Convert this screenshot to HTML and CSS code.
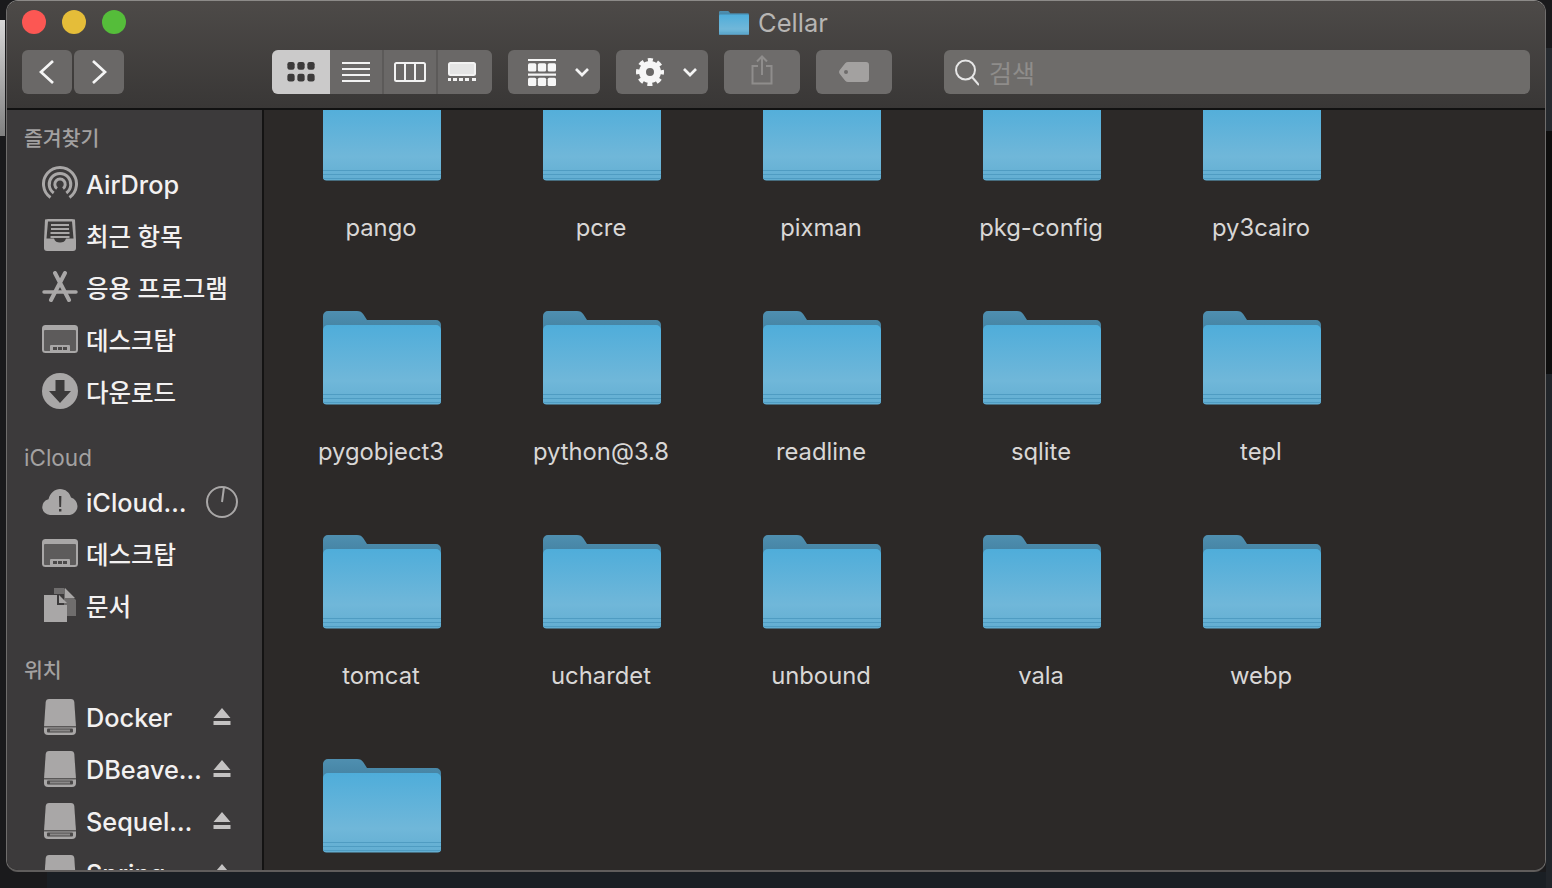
FILE: index.html
```html
<!DOCTYPE html>
<html>

<head>
	<meta charset="utf-8">
	<title>Cellar</title>
	<link rel="stylesheet" href="styles.css">
</head>

<body>
	<svg class="sprite" width="0" height="0">
		<defs>
			<linearGradient id="folderFront" x1="0" y1="0" x2="0" y2="1">
				<stop offset="0" stop-color="#4fadda" />
				<stop offset="0.7" stop-color="#70b7d9" />
				<stop offset="1" stop-color="#62aed2" />
			</linearGradient>
			<linearGradient id="folderBack" x1="0" y1="0" x2="0" y2="1">
				<stop offset="0" stop-color="#4f8fb0" />
				<stop offset="1" stop-color="#417f9f" />
			</linearGradient>
			<symbol id="folder" viewBox="0 0 118 94">
				<path fill="url(#folderBack)" d="M0 20V5a5 5 0 0 1 5-5h29c3 0 5 1 6.500 3.500L44 9h69a5 5 0 0 1 5 5v10H0z" />
				<path fill="url(#folderFront)" d="M0 19a5 5 0 0 1 5-5h108a5 5 0 0 1 5 5v71a3.500 3.500 0 0 1-3.500 3.500H3.500A3.500 3.500 0 0 1 0 90z" />
				<path fill="none" stroke="#4f9cc2" stroke-width="1" d="M0 83.500h118M0 87.500h118M0 91.500h118" />
			</symbol>
			<symbol id="desk" viewBox="0 0 36 28">
				<rect width="36" height="28" rx="3.500" fill="#a9a7a7" />
				<rect x="2" y="5" width="32" height="21" rx="1" fill="#5d5b5b" />
				<rect x="8" y="20" width="20" height="8" rx="1" fill="#a9a7a7" />
				<path fill="#4b4949" d="M11 22h4v3h-4zM16 22h4v3h-4zM21 22h4v3h-4z" />
			</symbol>
			<symbol id="drive" viewBox="0 0 32 36">
				<path fill="#a9a7a7" d="M5 0h22c2 0 3 1 3.300 3L32 28v4a4 4 0 0 1-4 4H4a4 4 0 0 1-4-4v-4L1.700 3C2 1 3 0 5 0z" />
				<path fill="#5a5858" d="M0 27h32v1.500H0z" />
				<rect x="3" y="29.500" width="26" height="4" rx="1" fill="#4b4949" />
				<rect x="6" y="30.500" width="20" height="2" fill="#8b8989" />
			</symbol>
			<symbol id="eject" viewBox="0 0 18 18">
				<path fill="#c4c2c2" d="M9 0l8.500 10H.5zM.5 13h17v4H.5z" />
			</symbol>
		</defs>
	</svg>

	<div class="window">
		<header class="toolbar">
			<div class="titlebar">
				<div class="lights">
					<span class="light red"></span>
					<span class="light yellow"></span>
					<span class="light green"></span>
				</div>
				<div class="title">
					<svg class="title-folder" width="30" height="24">
						<use href="#folder" />
					</svg>
					<span>Cellar</span>
				</div>
			</div>
			<div class="tools">
				<div class="nav">
					<button class="btn nav-btn"><svg width="18" height="26" viewBox="0 0 18 26">
							<path d="M15 2L3 13l12 11" class="line" />
						</svg></button>
					<button class="btn nav-btn"><svg width="18" height="26" viewBox="0 0 18 26">
							<path d="M3 2l12 11L3 24" class="line" />
						</svg></button>
				</div>
				<div class="views">
					<button class="btn view on"><svg width="28" height="20" viewBox="0 0 30 22" fill="#3c3a3a">
							<rect width="8" height="8.500" rx="2.500" />
							<rect x="11" width="8" height="8.500" rx="2.500" />
							<rect x="22" width="8" height="8.500" rx="2.500" />
							<rect y="13" width="8" height="8.500" rx="2.500" />
							<rect x="11" y="13" width="8" height="8.500" rx="2.500" />
							<rect x="22" y="13" width="8" height="8.500" rx="2.500" />
						</svg></button>
					<button class="btn view"><svg width="28" height="20" viewBox="0 0 28 20" fill="#f2f2f2">
							<path d="M0 0h28v2H0zM0 6h28v2H0zM0 12h28v2H0zM0 18h28v2H0z" />
						</svg></button>
					<button class="btn view"><svg width="32" height="20" viewBox="0 0 32 20" fill="none" stroke="#f2f2f2" stroke-width="2">
							<rect x="1" y="1" width="30" height="18" rx="1.500" />
							<path d="M11 1v18M21 1v18" />
						</svg></button>
					<button class="btn view wide"><svg width="28" height="20" viewBox="0 0 28 20">
							<rect x="1" y="1" width="26" height="12" rx="1.500" fill="#e4e4e4" stroke="#f2f2f2" stroke-width="2" />
							<path fill="#f2f2f2" d="M0 16h3v3H0zM5 16h4v3H5zM11 16h4v3h-4zM17 16h4v3h-4zM24 16h4v3h-4z" />
						</svg></button>
				</div>
				<button class="btn menu">
					<svg width="28" height="28" viewBox="0 0 27 27" fill="#f6f6f6">
						<path d="M0 1h27v2H0zM0 15h27v2H0z" />
						<rect x="0" y="5" width="8" height="8" rx="1.500" />
						<rect x="9.500" y="5" width="8" height="8" rx="1.500" />
						<rect x="19" y="5" width="8" height="8" rx="1.500" />
						<rect x="0" y="19" width="8" height="8" rx="1.500" />
						<rect x="9.500" y="19" width="8" height="8" rx="1.500" />
						<rect x="19" y="19" width="8" height="8" rx="1.500" />
					</svg>
					<svg width="16" height="10" viewBox="0 0 16 10">
						<path d="M2 2l6 6 6-6" class="line" />
					</svg>
				</button>
				<button class="btn menu">
					<svg width="28" height="28" viewBox="0 0 28 28">
						<circle cx="14" cy="14" r="7.500" fill="none" stroke="#f6f6f6" stroke-width="7" />
						<circle cx="14" cy="14" r="12" fill="none" stroke="#f6f6f6" stroke-width="4" stroke-dasharray="5 4.425" stroke-dashoffset="2.500" />
					</svg>
					<svg width="16" height="10" viewBox="0 0 16 10">
						<path d="M2 2l6 6 6-6" class="line" />
					</svg>
				</button>
				<button class="btn action share"><svg width="22" height="30" viewBox="0 0 22 30" fill="none" stroke="#8f8d8c" stroke-width="2">
						<path d="M7 11H1.500v17.500h19V11H15M11 20V2M6 6.500L11 1.500l5 5" />
					</svg></button>
				<button class="btn action"><svg width="30" height="20" viewBox="0 0 30 20">
						<path fill="#a3a1a0" d="M9 0h18a3 3 0 0 1 3 3v14a3 3 0 0 1-3 3H9c-1 0-2-.4-2.800-1.200L.8 12c-1-1.200-1-2.800 0-4l5.400-6.800C7 .4 8 0 9 0z" />
						<circle cx="7" cy="10" r="2" fill="#6e6c6b" />
					</svg></button>
				<div class="search">
					<svg width="24" height="28" viewBox="0 0 24 28" fill="none" stroke="#e6e6e6" stroke-width="2">
						<circle cx="10.500" cy="12" r="9.500" />
						<path d="M17 19l7 8" />
					</svg>
					<span>검색</span>
				</div>
			</div>
		</header>

		<div class="body">
			<aside class="sidebar">
				<h3 class="ko">즐겨찾기</h3>
				<div class="item">
					<span class="ico"><svg width="36" height="36" viewBox="0 0 36 36" fill="none" stroke="#a9a7a7" stroke-width="3">
							<path d="M8.500 31.500A16.500 16.500 0 1 1 27.500 31.500" />
							<path d="M11.700 27A10.800 10.800 0 1 1 24.300 27" />
							<path d="M15 22.500A5.200 5.200 0 1 1 21 22.500" />
						</svg></span>AirDrop
				</div>
				<div class="item ko">
					<span class="ico"><svg width="32" height="32" viewBox="0 0 32 32">
							<path fill="#a9a7a7" d="M4 0h24l3 0.500 1 21V29a3 3 0 0 1-3 3H3a3 3 0 0 1-3-3v-7.500L1 .5z" />
							<path fill="#3c3a3a" d="M4 2.500h24l1.500 17H22c-1 3-3 4-6 4s-5-1-6-4H2.500z" />
							<path fill="#a9a7a7" d="M7 5h18v2H7zM7 9h18v2H7zM6.500 13h19v2h-19zM6.500 17h19v2h-19z" />
						</svg></span>최근 항목
				</div>
				<div class="item ko">
					<span class="ico"><svg width="36" height="32" viewBox="0 0 36 32" fill="none" stroke="#a9a7a7" stroke-linecap="round">
							<path stroke-width="4" d="M23 2L9 29M13 2l14 27" />
							<path stroke-width="3.500" d="M2 21h32" />
						</svg></span>응용 프로그램
				</div>
				<div class="item ko">
					<span class="ico"><svg width="36" height="28">
							<use href="#desk" />
						</svg></span>데스크탑
				</div>
				<div class="item ko">
					<span class="ico"><svg width="36" height="36" viewBox="0 0 36 36">
							<circle cx="18" cy="18" r="18" fill="#a9a7a7" />
							<path fill="#3c3a3a" d="M13.500 7h9v11H29L18 30 7 18h6.500z" />
						</svg></span>다운로드
				</div>

				<h3 class="cloud">iCloud</h3>
				<div class="item">
					<span class="ico"><svg width="36" height="26" viewBox="0 0 36 26">
							<path fill="#a9a7a7" d="M8 26a8 8 0 0 1-1.500-15.800C8 4 13 0 18 0c5.500 0 9.500 3.500 11 8.500A9 9 0 0 1 28 26z" />
							<path fill="#3c3a3a" d="M17 7h2.400l-.3 11h-1.800zM17 20h2.400v2.500H17z" />
						</svg></span>
					<span class="name">iCloud…</span>
					<svg class="pie" width="32" height="32" viewBox="0 0 32 32" fill="none" stroke="#a9a7a7" stroke-width="2">
						<circle cx="16" cy="16" r="15" />
						<path d="M16 16l2-15" />
					</svg>
				</div>
				<div class="item ko">
					<span class="ico"><svg width="36" height="28">
							<use href="#desk" />
						</svg></span>데스크탑
				</div>
				<div class="item ko">
					<span class="ico"><svg width="32" height="34" viewBox="0 0 32 34">
							<path fill="#6f6d6d" d="M10 0h10l12 12v16H20V6H10z" />
							<path fill="#a9a7a7" d="M0 7h13v10h10v17H0zM15 7l8 8h-8zM21 0l10 10H21z" />
						</svg></span>문서
				</div>

				<h3 class="places ko">위치</h3>
				<div class="item">
					<span class="ico"><svg width="32" height="36">
							<use href="#drive" />
						</svg></span>
					<span class="name">Docker</span>
					<svg class="eject" width="18" height="18">
						<use href="#eject" />
					</svg>
				</div>
				<div class="item">
					<span class="ico"><svg width="32" height="36">
							<use href="#drive" />
						</svg></span>
					<span class="name">DBeave…</span>
					<svg class="eject" width="18" height="18">
						<use href="#eject" />
					</svg>
				</div>
				<div class="item">
					<span class="ico"><svg width="32" height="36">
							<use href="#drive" />
						</svg></span>
					<span class="name">Sequel…</span>
					<svg class="eject" width="18" height="18">
						<use href="#eject" />
					</svg>
				</div>
				<div class="item">
					<span class="ico"><svg width="32" height="36">
							<use href="#drive" />
						</svg></span>
					<span class="name">Spring…</span>
					<svg class="eject" width="18" height="18">
						<use href="#eject" />
					</svg>
				</div>
			</aside>

			<main class="files">
				<div class="grid">
					<div class="cell"><svg class="folder" width="118" height="94"><use href="#folder" /></svg><span>pango</span></div>
					<div class="cell"><svg class="folder" width="118" height="94"><use href="#folder" /></svg><span>pcre</span></div>
					<div class="cell"><svg class="folder" width="118" height="94"><use href="#folder" /></svg><span>pixman</span></div>
					<div class="cell"><svg class="folder" width="118" height="94"><use href="#folder" /></svg><span>pkg-config</span></div>
					<div class="cell"><svg class="folder" width="118" height="94"><use href="#folder" /></svg><span>py3cairo</span></div>
					<div class="cell"><svg class="folder" width="118" height="94"><use href="#folder" /></svg><span>pygobject3</span></div>
					<div class="cell"><svg class="folder" width="118" height="94"><use href="#folder" /></svg><span>python@3.8</span></div>
					<div class="cell"><svg class="folder" width="118" height="94"><use href="#folder" /></svg><span>readline</span></div>
					<div class="cell"><svg class="folder" width="118" height="94"><use href="#folder" /></svg><span>sqlite</span></div>
					<div class="cell"><svg class="folder" width="118" height="94"><use href="#folder" /></svg><span>tepl</span></div>
					<div class="cell"><svg class="folder" width="118" height="94"><use href="#folder" /></svg><span>tomcat</span></div>
					<div class="cell"><svg class="folder" width="118" height="94"><use href="#folder" /></svg><span>uchardet</span></div>
					<div class="cell"><svg class="folder" width="118" height="94"><use href="#folder" /></svg><span>unbound</span></div>
					<div class="cell"><svg class="folder" width="118" height="94"><use href="#folder" /></svg><span>vala</span></div>
					<div class="cell"><svg class="folder" width="118" height="94"><use href="#folder" /></svg><span>webp</span></div>
					<div class="cell"><svg class="folder" width="118" height="94"><use href="#folder" /></svg></div>
				</div>
			</main>
		</div>
	</div>
</body>

</html>
```

FILE: styles.css
```css
html,
body {
	height: 100%;
}

body {
	margin: 0;
	height: 888px;
	overflow: hidden;
	box-sizing: border-box;
	padding-left: 6px;
	font-family: Inter, "Noto Sans CJK KR", sans-serif;
	background:
		linear-gradient(#d8d8d8, #808080) 0 20px / 5px 116px no-repeat,
		linear-gradient(#262a2f, #262a2f) 100% 48px / 6px 83px no-repeat,
		linear-gradient(#0e0e0e, #0e0e0e) 100% 131px / 6px 243px no-repeat,
		linear-gradient(#21252a, #21252a) 100% 374px / 6px 514px no-repeat,
		linear-gradient(#1a1f24, #1a1f24) 47px 100% / 1505px 16px no-repeat,
		#1a1a1c;
}

.sprite {
	position: absolute;
}

.window {
	width: 1540px;
	height: 872px;
	box-sizing: border-box;
	display: flex;
	flex-direction: column;
	overflow: hidden;
	border: 1px solid #6f6d6c;
	border-top-color: #8c8a88;
	border-bottom: 2px solid #5f5d5c;
	border-radius: 12px;
}

.toolbar {
	flex: none;
	height: 107px;
	background: linear-gradient(#4d4a48, #393736);
	border-bottom: 2px solid #111;
}

.titlebar {
	height: 43px;
	position: relative;
	display: flex;
	align-items: center;
	justify-content: center;
	padding-right: 5px;
}

.lights {
	position: absolute;
	left: 15px;
	top: 9px;
	display: flex;
	gap: 16px;
}

.light {
	width: 24px;
	height: 24px;
	border-radius: 50%;
}

.red {
	background-color: #fc5753;
}

.yellow {
	background-color: #e5bd39;
}

.green {
	background-color: #55bd3a;
}

.title {
	display: flex;
	align-items: center;
	gap: 9px;
	font-size: 25.500px;
	color: #b7b5b3;
}

.tools {
	display: flex;
	align-items: center;
	height: 44px;
	margin-top: 6px;
	padding-left: 15px;
}

.btn {
	height: 44px;
	padding: 0;
	border: none;
	border-radius: 6px;
	background-color: #6a6867;
	display: flex;
	align-items: center;
	justify-content: center;
}

.line {
	fill: none;
	stroke: #f4f4f4;
	stroke-width: 2.700;
}

.nav {
	display: flex;
	gap: 2px;
	margin-right: 148px;
}

.nav-btn {
	width: 50px;
}

.views {
	display: flex;
	gap: 2px;
	width: 220px;
	margin-right: 16px;
	border-radius: 6px;
	overflow: hidden;
	background-color: #5c5a59;
}

.view {
	width: 52px;
	border-radius: 0;
}

.view.on {
	width: 58px;
	background-color: #cbcaca;
	margin-right: -2px;
}

.view.wide {
	width: 54px;
	padding-right: 6px;
	box-sizing: border-box;
}

.menu {
	width: 92px;
	gap: 18px;
	margin-right: 16px;
	padding-left: 20px;
	box-sizing: border-box;
	justify-content: flex-start;
}

.action {
	width: 76px;
	margin-right: 16px;
	background-color: #6e6c6b;
}

.share svg {
	margin-bottom: 4px;
}

.search {
	margin-left: 36px;
	width: 586px;
	height: 44px;
	box-sizing: border-box;
	padding-left: 11px;
	display: flex;
	align-items: center;
	gap: 10px;
	border-radius: 6px;
	background-color: #6e6c6a;
	color: #8f8d8b;
	font-size: 25px;
}

.body {
	flex: 1;
	min-height: 0;
	display: flex;
}

.sidebar {
	flex: none;
	width: 255px;
	overflow: hidden;
	background-color: #3c3a3b;
	border-right: 2px solid #141313;
}

.sidebar h3 {
	margin: 0;
	padding: 14px 0 0 17px;
	height: 48px;
	box-sizing: border-box;
	line-height: 30px;
	font-size: 22.500px;
	font-weight: 400;
	color: #a3a1a1;
}

.sidebar h3.ko {
	font-size: 20.500px;
	font-weight: 500;
}

.sidebar h3.cloud {
	margin-top: 15px;
	height: 43px;
	padding-top: 10px;
}

.sidebar h3.places {
	margin-top: 13px;
	height: 46px;
	padding-top: 11px;
}

.item {
	height: 52px;
	box-sizing: border-box;
	display: flex;
	align-items: center;
	padding-left: 35px;
	font-size: 25.300px;
	font-weight: 500;
	color: #f3f1f1;
	white-space: nowrap;
}

.item.ko {
	font-size: 24.500px;
	padding-bottom: 2px;
}

.ico {
	width: 36px;
	margin-right: 8px;
	flex: none;
	display: flex;
	justify-content: center;
}

.name {
	flex: 1;
}

.pie {
	margin-right: 24px;
}

.eject {
	margin-right: 31px;
}

.files {
	flex: 1;
	min-width: 0;
	overflow: hidden;
	background-color: #2c2928;
}

.grid {
	display: grid;
	grid-template-columns: repeat(5, 220px);
	grid-auto-rows: 224px;
	margin-top: -23px;
	padding-left: 7px;
}

.cell {
	display: flex;
	flex-direction: column;
	align-items: center;
	font-size: 23.800px;
	color: #d9d7d6;
}

.folder {
	margin-left: 2px;
}

.cell span {
	margin-top: 32px;
}
```
